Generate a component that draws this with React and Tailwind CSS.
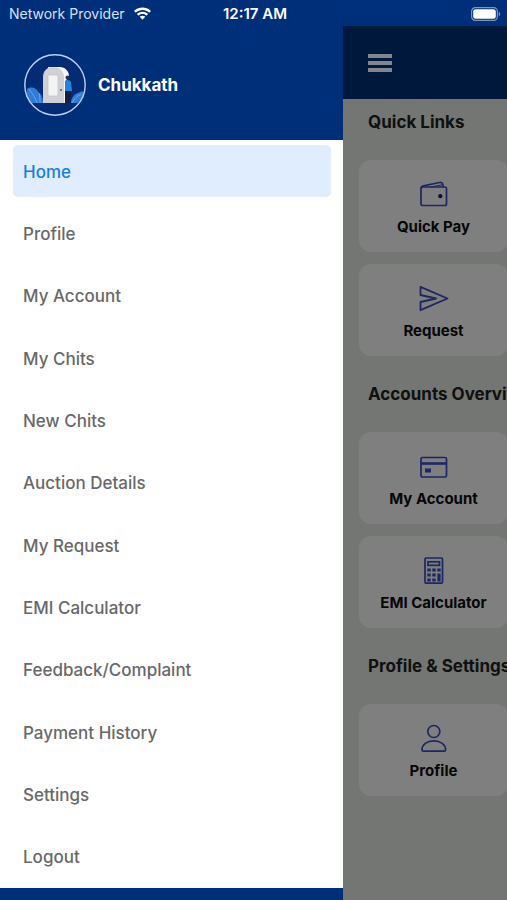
const menuItems = [
  "Home",
  "Profile",
  "My Account",
  "My Chits",
  "New Chits",
  "Auction Details",
  "My Request",
  "EMI Calculator",
  "Feedback/Complaint",
  "Payment History",
  "Settings",
  "Logout",
];

function WifiIcon() {
  return (
    <svg viewBox="0 0 20 15" className="h-[14px] w-[19px]" fill="#fff" aria-hidden="true">
      <path d="M10 3.1c2.7 0 5.1 1 7 2.8.1.1.3.1.4 0l1.4-1.4c.1-.1.1-.3 0-.5C16.400 1.700 13.300.5 10 .5S3.600 1.700 1.200 4c-.1.200-.1.400 0 .5l1.400 1.400c.1.100.3.100.4 0 1.900-1.800 4.300-2.800 7-2.800z" />
      <path d="M10 7.600c1.500 0 2.800.5 3.900 1.500.1.100.3.100.5 0l1.400-1.400c.1-.1.100-.3 0-.5C14.200 5.800 12.200 5 10 5s-4.200.8-5.800 2.200c-.1.200-.1.400 0 .5l1.400 1.400c.2.100.4.100.5 0 1.100-1 2.400-1.500 3.900-1.500z" />
      <path d="M12.700 10.800c.2-.2.200-.4 0-.5-.8-.6-1.700-.9-2.700-.9s-1.900.3-2.700.9c-.2.100-.2.300 0 .5l2.500 2.500c.1.100.3.100.4 0z" />
    </svg>
  );
}

function BatteryIcon() {
  return (
    <svg viewBox="0 0 30 14" className="h-[14px] w-[30px]" aria-hidden="true">
      <rect x=".6" y=".6" width="25.800" height="12.800" rx="3.800" fill="none" stroke="#8095be" strokeWidth="1.200" />
      <rect x="2.200" y="2.200" width="22.600" height="9.600" rx="2.400" fill="#fff" />
      <path d="M27.800 5v4c1-.3 1.400-1.100 1.400-2s-.4-1.700-1.400-2z" fill="#8095be" />
    </svg>
  );
}

function DoorLogo() {
  return (
    <svg viewBox="0 0 62 62" className="size-[62px] shrink-0" role="img" aria-label="Chukkath logo">
      <circle cx="31" cy="31" r="30" fill="#032c75" />
      <path d="M3 35c4-3 10-1 12 4 3 1 4 6 4 10H8C4 46 2 41 3 35z" fill="#2f7bd6" />
      <path d="M5 35c3 4 6 8 8 14M15 39c1 4 1 7 1 10" fill="none" stroke="#74aff0" strokeWidth=".8" />
      <path d="M47 49c0-5 3-9 7-10 2-1 4-2 6-1-1 5-4 9-7 11z" fill="#2f7bd6" />
      <path d="M48 49c2-4 5-7 9-9" fill="none" stroke="#74aff0" strokeWidth=".8" />
      <path d="M24 13h12c5 0 9 4 9 9l-4 6v21H30z" fill="#f5f6f8" />
      <path d="M19 49V23c0-6 4-10 10-10s11 4 11 10v26z" fill="#d0d1d5" />
      <path d="M24 21h10v21H24z" fill="#f3f3f4" stroke="#bfc1c6" strokeWidth=".7" />
      <circle cx="37" cy="36" r="1" fill="#555a66" />
      <circle cx="43.500" cy="23.500" r="2" fill="#27334b" />
      <path d="M41 27c2-2 5-1 6 1l1 9-2 1h-5z" fill="#2583dc" />
      <path d="M41 37h6l-1 12h-2v-8l-1 8h-2z" fill="#16203a" />
      <circle cx="31" cy="31" r="30.200" fill="none" stroke="#b9d3f5" strokeWidth="1.400" />
    </svg>
  );
}

function WalletIcon() {
  return (
    <svg viewBox="0 0 32 28" className="h-7 w-8" fill="none" stroke="#1c2763" strokeWidth="1.700" strokeLinejoin="round" aria-hidden="true">
      <rect x="3" y="7" width="25.500" height="18.500" rx="1.800" />
      <path d="M3 8.500c0-1.600 1-2.300 2.500-2.700l16-3.300c2-.4 3 .3 3.400 2L25 7" />
      <path d="M13 7l11-2.200" strokeWidth="1" />
      <circle cx="22.300" cy="16.200" r="1.300" fill="#0a0f2e" stroke="#0a0f2e" />
    </svg>
  );
}

function SendIcon() {
  return (
    <svg viewBox="0 0 32 28" className="h-7 w-8" fill="none" stroke="#1c2763" strokeWidth="1.800" strokeLinejoin="round" aria-hidden="true">
      <path d="M2.500 2.800L29.500 14.500 2.500 26.200v-8.200L18 14.500 2.500 11z" />
    </svg>
  );
}

function CardIcon() {
  return (
    <svg viewBox="0 0 32 28" className="h-7 w-8" fill="none" stroke="#1c2763" strokeWidth="1.700" aria-hidden="true">
      <rect x="3" y="5.500" width="25.500" height="19.500" rx="1.600" />
      <path d="M3 11.500h25.500" strokeWidth="2.600" />
      <rect x="7" y="16.500" width="6" height="4" fill="#1c2763" stroke="none" />
    </svg>
  );
}

function CalculatorIcon() {
  return (
    <svg viewBox="0 0 32 28" className="h-7 w-8" fill="none" stroke="#1c2763" strokeWidth="1.700" aria-hidden="true">
      <rect x="7" y="2" width="17.500" height="25.200" rx="1.200" />
      <rect x="10" y="5.800" width="11.500" height="3.500" />
      <path d="M9.300 14h3.400M14.300 14h3.400M19.300 14h3.400M9.300 19h3.400M14.300 19h3.400M9.300 24h3.400M14.300 24h3.400" strokeWidth="3" />
      <path d="M21 17.500v8" strokeWidth="3.200" />
    </svg>
  );
}

function PersonIcon() {
  return (
    <svg viewBox="0 0 32 28" className="h-7 w-8" fill="none" stroke="#1c2763" strokeWidth="1.700" strokeLinejoin="round" aria-hidden="true">
      <circle cx="15.800" cy="7.500" r="6" />
      <path d="M4 25.700c0-5 5-8.800 11.800-8.800s11.800 3.800 11.800 8.800c0 .8-.5 1.400-1.500 1.400H5.500C4.500 27.100 4 26.500 4 25.700z" />
    </svg>
  );
}

const sections = [
  {
    title: "Quick Links",
    cards: [
      { label: "Quick Pay", Icon: WalletIcon },
      { label: "Request", Icon: SendIcon },
    ],
  },
  {
    title: "Accounts Overview",
    cards: [
      { label: "My Account", Icon: CardIcon },
      { label: "EMI Calculator", Icon: CalculatorIcon },
    ],
  },
  {
    title: "Profile & Settings",
    cards: [{ label: "Profile", Icon: PersonIcon }],
  },
];

function StatusBar() {
  return (
    <div className="grid h-[26px] shrink-0 grid-cols-[1fr_auto_1fr] items-center pt-px pr-1.5 pl-[9px] text-[15px] leading-5 text-white">
      <div className="flex items-center gap-2 text-sm text-[#d5e0f5]">
        <span>Network Provider</span>
        <WifiIcon />
      </div>
      <span className="font-semibold">12:17 AM</span>
      <div className="flex justify-end">
        <BatteryIcon />
      </div>
    </div>
  );
}

function Drawer() {
  return (
    <aside className="flex w-[343px] shrink-0 flex-col">
      <header className="flex h-[114px] shrink-0 items-center gap-3 pt-1 pl-6 text-white">
        <DoorLogo />
        <h1 className="text-[17px] leading-6 font-bold">Chukkath</h1>
      </header>
      <nav className="grid flex-1 auto-rows-fr gap-2.5 bg-white py-[5px] pr-3 pl-[13px]">
        {menuItems.map((item, index) => (
          <a
            key={item}
            href="#"
            aria-current={index === 0 ? "page" : undefined}
            className={
              index === 0
                ? "flex min-h-10 items-center rounded-[5px] bg-[#dfedfe] px-2.5 pt-px text-[17px] leading-6 font-medium text-[#1a7fdc]"
                : "flex min-h-10 items-center rounded-[5px] px-2.5 pt-px text-[17px] leading-6 font-medium text-[#686868]"
            }
          >
            {item}
          </a>
        ))}
      </nav>
      <div className="h-3 shrink-0" />
    </aside>
  );
}

function Dashboard() {
  return (
    <main className="min-w-0 flex-1 overflow-hidden bg-[#737672]">
      <header className="flex h-[73px] items-center bg-[#00183c] pl-[25px]">
        <button type="button" aria-label="Open menu" className="flex w-6 flex-col gap-[3px]">
          <span className="h-1 bg-[#80868f]" />
          <span className="h-1 bg-[#80868f]" />
          <span className="h-1 bg-[#80868f]" />
        </button>
      </header>
      {sections.map(({ title, cards }) => (
        <section key={title} className="pb-[15px]">
          <h2 className="pt-[11px] pb-[26px] pl-[25px] text-[17px] leading-6 font-bold whitespace-nowrap text-[#101010]">
            {title}
          </h2>
          <div className="flex flex-col gap-3 pl-4">
            {cards.map(({ label, Icon }) => (
              <button
                key={label}
                type="button"
                className="flex h-[92px] w-[149px] flex-col items-center gap-[7px] rounded-xl bg-[#7f7f7f] pt-5 text-[15px] leading-6 font-bold text-[#060606]"
              >
                <Icon />
                <span>{label}</span>
              </button>
            ))}
          </div>
        </section>
      ))}
    </main>
  );
}

export default function App() {
  return (
    <div className="flex min-h-screen flex-col bg-[#002f7a] font-['Inter','Liberation_Sans',sans-serif]">
      <StatusBar />
      <div className="flex flex-1">
        <Drawer />
        <Dashboard />
      </div>
    </div>
  );
}
